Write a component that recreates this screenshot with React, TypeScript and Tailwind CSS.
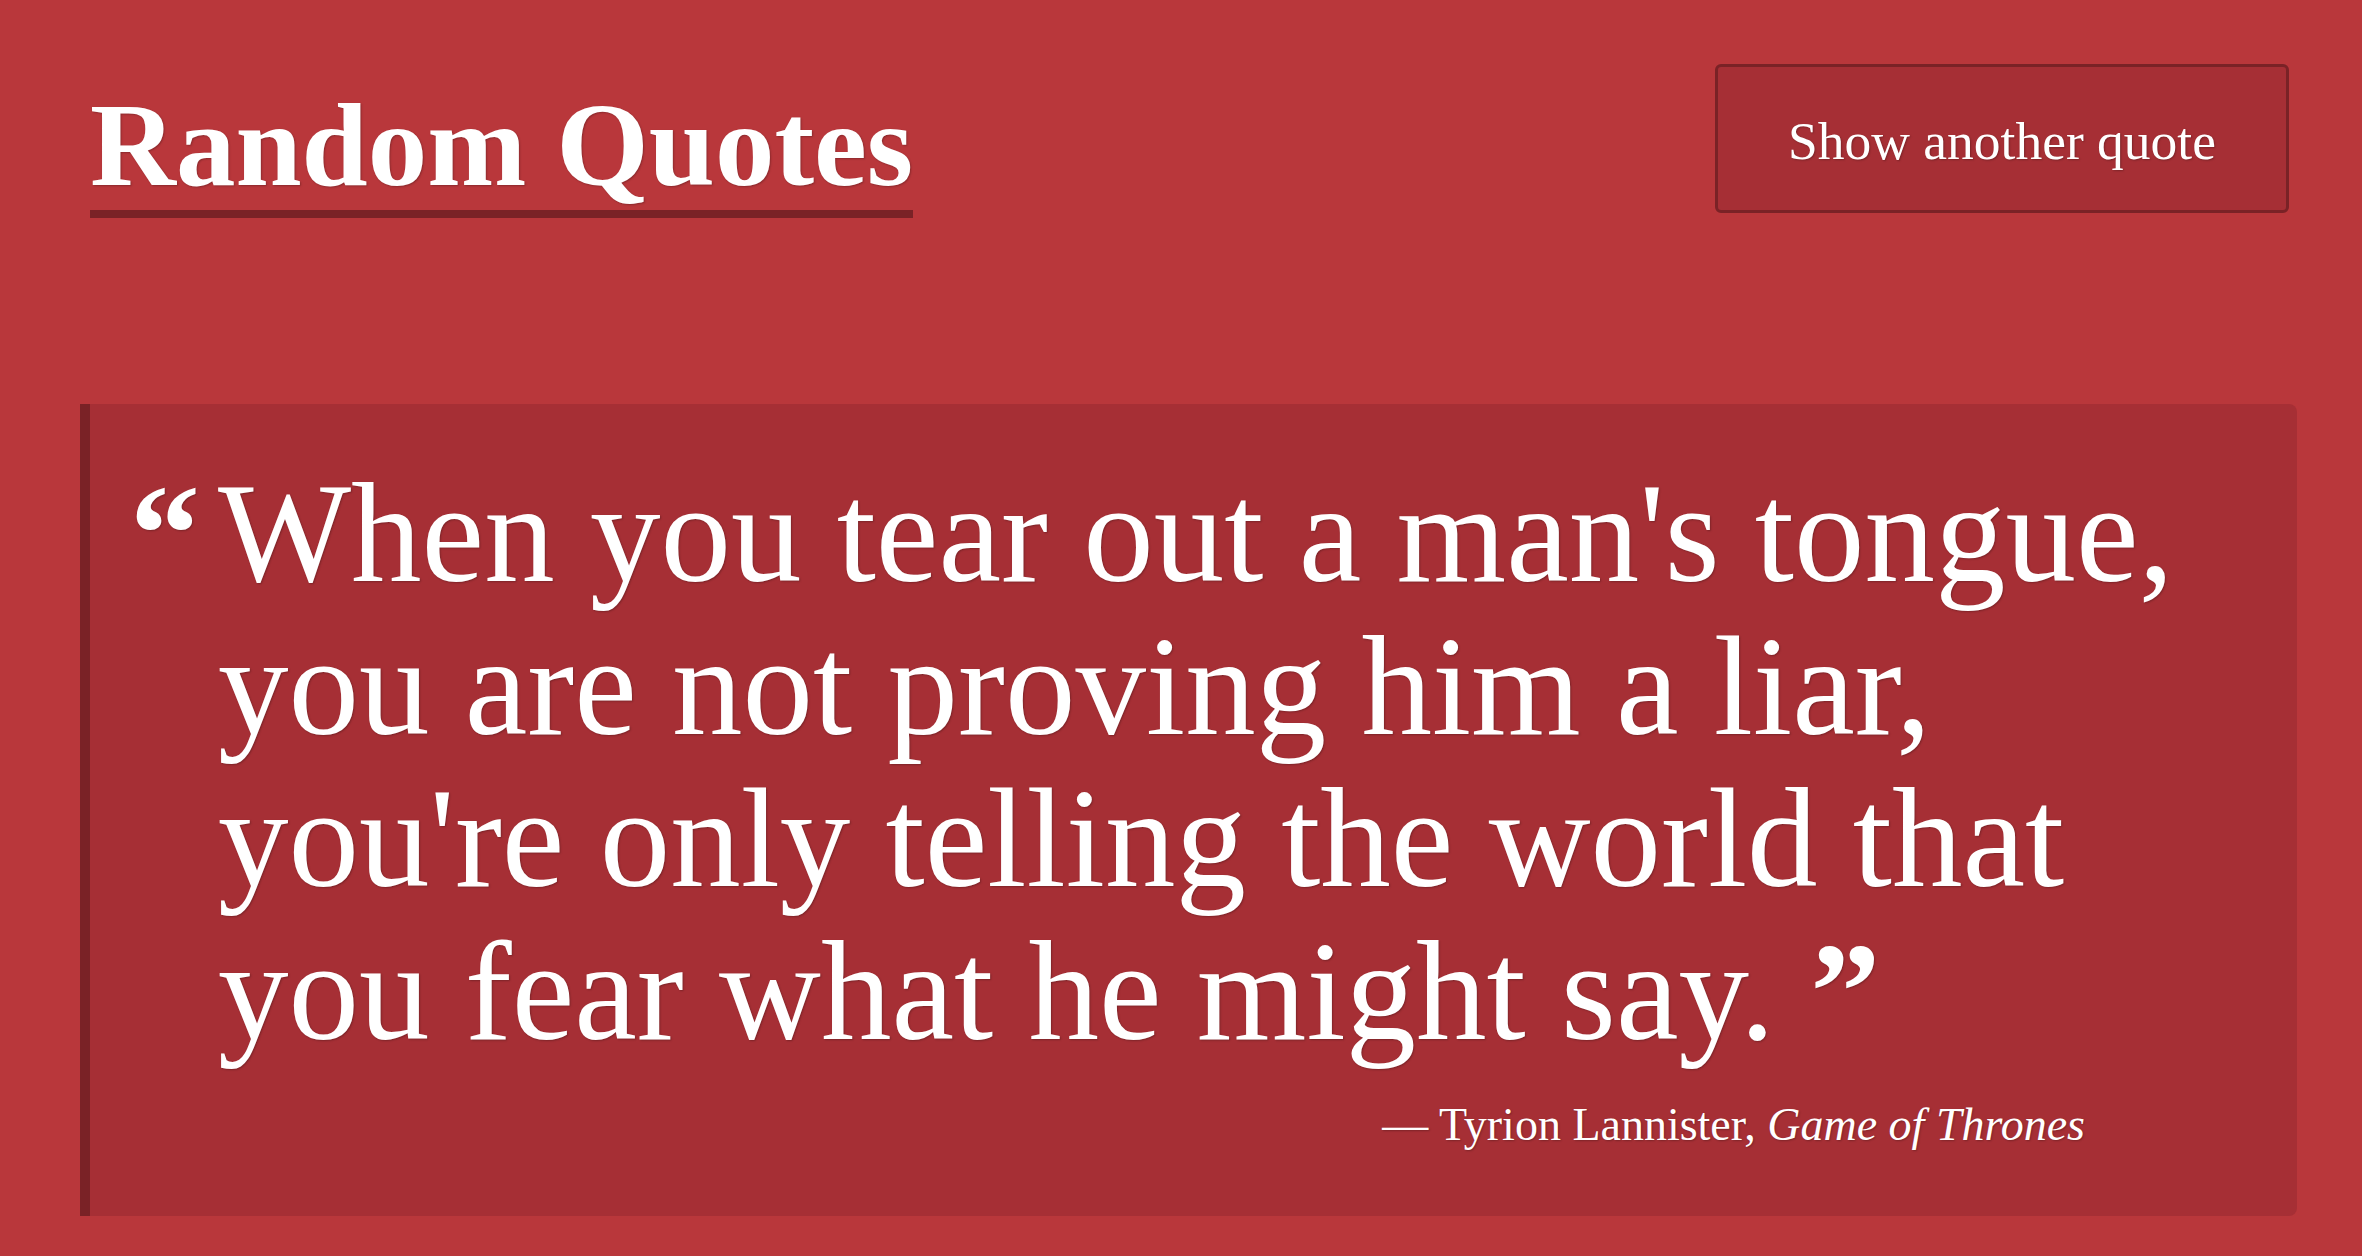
import React from 'react';

const serif = "font-['Liberation_Serif','Times_New_Roman',serif]";
const shadow = '[text-shadow:1px_1px_2px_rgba(0,0,0,0.25)]';

export default function App() {
  return (
    <div className={`min-h-screen w-full bg-[#b9373b] pt-[64px] pl-[80px] pr-[65px] text-white ${serif}`}>
      <header className="flex items-start justify-between pl-[10px] pr-[8px]">
        <h1
          className={`mt-[22px] inline-block border-b-[8px] border-[#7a2226] pb-[5px] text-[119px] font-bold leading-[119px] ${shadow}`}
        >
          Random Quotes
        </h1>
        <button
          type="button"
          className={`flex h-[149px] w-[574px] items-center justify-center rounded-[6px] border-[3px] border-[#7a2226] bg-[#a62f35] pt-[7px] text-[53.5px] leading-none ${shadow}`}
        >
          Show another quote
        </button>
      </header>

      {/* Quote card */}
      <blockquote className="mt-[186px] rounded-r-[8px] border-l-[10px] border-[#7a2226] bg-[#a62f35] pt-[53px] pb-[68px] pl-[40px]">
        <div className="flex items-baseline">
          <span className={`w-[88px] shrink-0 text-[140px] font-bold leading-[152.7px] ${shadow}`}>“</span>
          <p className={`whitespace-nowrap text-[141px] leading-[152.7px] ${shadow}`}>
            When you tear out a man's tongue,
            <br />
            you are not proving him a liar,
            <br />
            you're only telling the world that
            <br />
            you fear what he might say.{' '}
            <span className="text-[140px] font-bold">”</span>
          </p>
        </div>
        <footer className={`mt-[33px] pr-[212px] text-right text-[46px] leading-[46px] ${shadow}`}>
          — Tyrion Lannister, <cite className="italic">Game of Thrones</cite>
        </footer>
      </blockquote>
    </div>
  );
}
